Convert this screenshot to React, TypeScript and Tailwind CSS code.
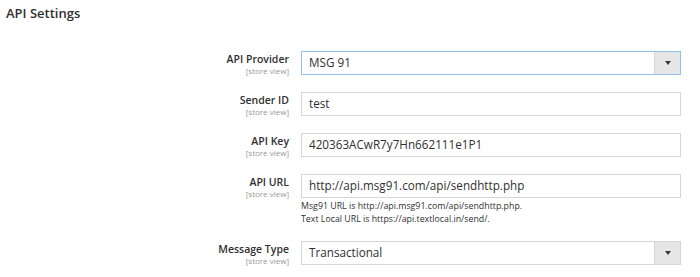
import { ChangeEvent, useState } from "react";

interface Field {
  label: string;
  value: string;
  select?: boolean;
  focused?: boolean;
  note?: string[];
  top: string;
}

const fields: Field[] = [
  { label: "API Provider", value: "MSG 91", select: true, focused: true, top: "mt-[28px]" },
  { label: "Sender ID", value: "test", top: "mt-[16px]" },
  { label: "API Key", value: "420363ACwR7y7Hn662111e1P1", top: "mt-[16px]" },
  {
    label: "API URL",
    value: "http://api.msg91.com/api/sendhttp.php",
    note: [
      "Msg91 URL is http://api.msg91.com/api/sendhttp.php.",
      "Text Local URL is https://api.textlocal.in/send/.",
    ],
    top: "mt-[16px]",
  },
  { label: "Message Type", value: "Transactional", select: true, top: "mt-[15px]" },
];

function Row({ field }: { field: Field }) {
  const [value, setValue] = useState(field.value);

  return (
    <div className={`flex flex-row gap-[12px] ${field.top}`}>
      {/* Label */}
      <div className="flex w-[289px] flex-col items-end pt-[2px]">
        <span className="text-[10.5px] leading-[13px] font-semibold text-[#303030]">{field.label}</span>
        <span className="text-[8px] leading-[10px] text-[#999999]">[store view]</span>
      </div>

      {/* Control */}
      <div className="flex w-[380px] flex-col">
        <div
          className={`flex h-[24px] flex-row border ${
            field.focused ? "border-[#8fc1ec]" : "border-[#d6d6d6]"
          } bg-white`}
        >
          <input
            value={value}
            onChange={(e: ChangeEvent<HTMLInputElement>) => setValue(e.target.value)}
            className="min-w-0 flex-1 bg-transparent pl-[7px] text-[11.7px] text-[#303030] outline-none"
          />
          {field.select && (
            <div className="flex w-[26px] items-center justify-center border-l border-[#d6d6d6] bg-[#e6e6e6]">
              <span className="h-0 w-0 border-x-[3.5px] border-t-[4px] border-x-transparent border-t-[#41362f]" />
            </div>
          )}
        </div>

        {/* Note */}
        {field.note && (
          <div className="mt-[2px] flex flex-col text-[8.8px] leading-[13px] text-[#303030]">
            {field.note.map((line) => (
              <span key={line}>{line}</span>
            ))}
          </div>
        )}
      </div>
    </div>
  );
}

export default function App() {
  return (
    <main
      className="min-h-screen bg-white pt-[4px] pl-[6px]"
      style={{ fontFamily: '"Open Sans", "Liberation Sans", sans-serif' }}
    >
      {/* Header */}
      <h1 className="text-[13px] leading-[19px] font-semibold text-[#303030]">API Settings</h1>

      {/* Fields */}
      <section className="-ml-[6px] flex flex-col">
        {fields.map((field) => (
          <Row key={field.label} field={field} />
        ))}
      </section>
    </main>
  );
}
